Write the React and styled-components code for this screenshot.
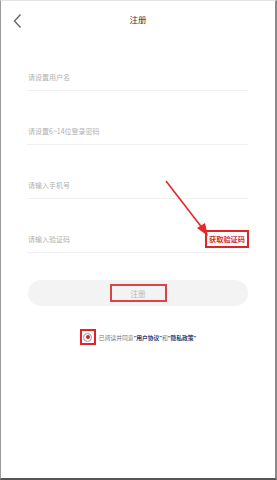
import React from 'react'
import styled, { createGlobalStyle } from 'styled-components'

const GlobalStyle = createGlobalStyle`
    html, body {
        margin: 0;
        padding: 0;
        background: #ffffff;
    }
    body {
        font-family: "Noto Sans CJK SC", "Noto Sans", sans-serif;
    }
`

const Screen = styled.div`
    position: relative;
    box-sizing: border-box;
    width: 277px;
    height: 480px;
    background: #ffffff;
    border-top: 1px solid #e4e4e4;
    border-left: 1px solid #9a9a9a;
    border-right: 2px solid #8a8a8a;
    border-bottom: 2px solid #555555;
    overflow: hidden;
`

const Header = styled.div`
    position: relative;
    display: flex;
    align-items: center;
    justify-content: center;
    height: 35px;
`

const BackButton = styled.div`
    position: absolute;
    left: 11px;
    top: 9px;
    width: 12px;
    height: 16px;
`

const Title = styled.h1`
    margin: 0;
    font-size: 8.5px;
    font-weight: 400;
    color: #333333;
`

const Form = styled.div`
    display: flex;
    flex-direction: column;
    padding: 28px 27px 0 26px;
`

const Field = styled.div`
    display: flex;
    align-items: center;
    justify-content: space-between;
    height: 26px;
    margin-top: ${p => (p.$first ? '0' : '27px')};
    border-bottom: 1px solid #f0f0f0;
`

const Placeholder = styled.span`
    font-size: 7px;
    color: #b0b0b0;
    padding-left: 1px;
`

const CodeButton = styled.span`
    display: inline-flex;
    align-items: center;
    justify-content: center;
    margin-right: -1px;
    padding: 2px 2px;
    font-size: 7.2px;
    font-weight: 700;
    color: #d42e2e;
    border: 2px solid #e0242b;
`

const SubmitButton = styled.div`
    display: flex;
    align-items: center;
    justify-content: center;
    height: 26px;
    margin-top: 27px;
    margin-left: 1px;
    border-radius: 13px;
    background: #f3f3f3;
`

const Marked = styled.span`
    display: inline-flex;
    align-items: center;
    justify-content: center;
    width: 53px;
    height: 14px;
    border: 2px solid #d9434a;
    font-size: 7.5px;
    color: #b8b8b8;
`

const Agreement = styled.div`
    display: flex;
    align-items: center;
    justify-content: center;
    gap: 3px;
    margin-top: 23px;
    margin-left: 1px;
`

const RadioBox = styled.span`
    display: inline-flex;
    align-items: center;
    justify-content: center;
    width: 12px;
    height: 12px;
    border: 2px solid #e0242b;
`

const Radio = styled.span`
    display: inline-flex;
    align-items: center;
    justify-content: center;
    box-sizing: border-box;
    width: 9px;
    height: 9px;
    border-radius: 50%;
    border: 1px solid #9a9a9a;

    &::after {
        content: "";
        width: 4px;
        height: 4px;
        border-radius: 50%;
        background: #d61f26;
    }
`

const AgreementText = styled.span`
    font-family: "Noto Sans", "Noto Sans CJK SC", sans-serif;
    font-size: 5.8px;
    color: #777777;
    white-space: nowrap;
`

const Link = styled.span`
    color: #2a3f7a;
    font-weight: 700;
`

const Arrow = styled.svg`
    position: absolute;
    left: 161px;
    top: 177px;
`

const fields = ['请设置用户名', '请设置6~14位登录密码', '请输入手机号']

const App = () => {
    return (
        <>
            <GlobalStyle />
            <Screen>
                <Header>
                    <BackButton>
                        <svg width="12" height="16" viewBox="0 0 12 16">
                            <path d="M8.5 1.5 L2.5 8 L8.5 14.5" fill="none" stroke="#666" strokeWidth="1.4" />
                        </svg>
                    </BackButton>
                    <Title>注册</Title>
                </Header>
                <Form>
                    {fields.map((text, i) => {
                        return (
                            <Field key={text} $first={i === 0}>
                                <Placeholder>{text}</Placeholder>
                            </Field>
                        )
                    })}
                    <Field>
                        <Placeholder>请输入验证码</Placeholder>
                        <CodeButton>获取验证码</CodeButton>
                    </Field>
                    <SubmitButton>
                        <Marked>注册</Marked>
                    </SubmitButton>
                    <Agreement>
                        <RadioBox><Radio /></RadioBox>
                        <AgreementText>
                            已阅读并同意<Link>“用户协议”</Link>和<Link>“隐私政策”</Link>
                        </AgreementText>
                    </Agreement>
                </Form>
                <Arrow width="50" height="62" viewBox="0 0 50 62">
                    <line x1="4" y1="3" x2="41" y2="51" stroke="#e8262b" strokeWidth="1.6" />
                    <polygon points="46,58 35,50 43,45" fill="#e8262b" />
                </Arrow>
            </Screen>
        </>
    )
}

export default App
